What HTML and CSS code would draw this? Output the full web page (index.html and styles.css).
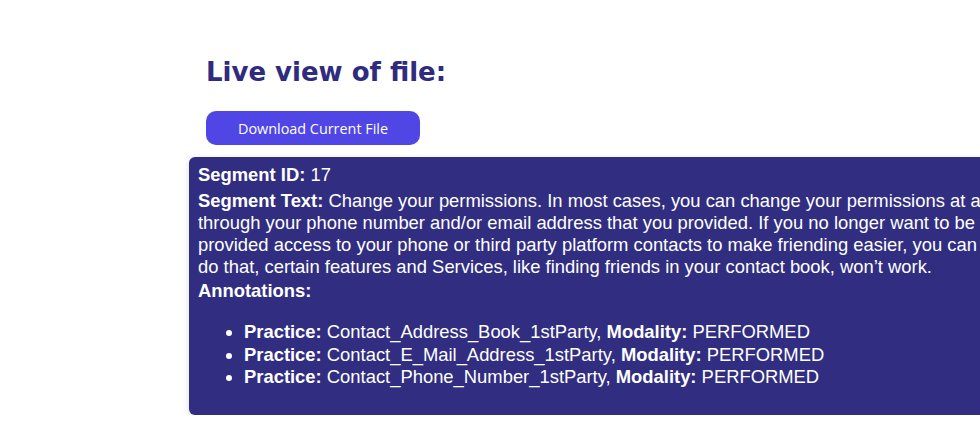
FILE: index.html
```html
<!DOCTYPE html>
<html>
<head>
<meta charset="utf-8">
<link rel="stylesheet" href="styles.css">
</head>
<body>
<div class="page">
  <div class="head">
    <h1 class="title">Live view of file:</h1>
    <button class="download">Download Current File</button>
  </div>
  <div class="segment">
    <p class="row id"><b>Segment ID:</b> 17</p>
    <p class="row text"><b>Segment Text:</b> Change your permissions. In most cases, you can change your permissions at any time to stop others from finding you<br>through your phone number and/or email address that you provided. If you no longer want to be found this way, just update<br>provided access to your phone or third party platform contacts to make friending easier, you can turn that off, but if you<br>do that, certain features and Services, like finding friends in your contact book, won’t work.</p>
    <p class="row"><b>Annotations:</b></p>
    <ul class="annotations">
      <li><b>Practice:</b> Contact_Address_Book_1stParty, <b>Modality:</b> PERFORMED</li>
      <li><b>Practice:</b> Contact_E_Mail_Address_1stParty, <b>Modality:</b> PERFORMED</li>
      <li><b>Practice:</b> Contact_Phone_Number_1stParty, <b>Modality:</b> PERFORMED</li>
    </ul>
  </div>
</div>
</body>
</html>
```
FILE: styles.css
```css
html, body {
  margin: 0;
  padding: 0;
  background: #ffffff;
  overflow: hidden;
}
.page {
  padding: 57px 0 0 189px;
  width: 1200px;
}
.head {
  padding-left: 17px;
  display: flex;
  flex-direction: column;
  align-items: flex-start;
}
.title {
  margin: 0;
  font-family: "DejaVu Sans", "Liberation Sans", sans-serif;
  font-weight: 700;
  font-size: 26px;
  line-height: 30px;
  color: #2f2b7d;
}
.download {
  margin-top: 24px;
  width: 214px;
  height: 34px;
  border: none;
  border-radius: 10px;
  background: #4f46e5;
  color: #ffffff;
  font-family: "Open Sans", sans-serif;
  font-size: 14.4px;
  padding: 0;
}
.segment {
  margin-top: 12px;
  width: 900px;
  background: #312e81;
  color: #ffffff;
  border-radius: 6px;
  box-shadow: 0 2px 6px rgba(0, 0, 0, 0.15);
  padding: 7px 9px 8px 9px;
  font-family: "Liberation Sans", Arial, sans-serif;
  font-size: 18.4px;
  line-height: 1.2;
}
.row {
  margin: 0;
}
.id {
  margin-bottom: 3.5px;
}
.text {
  white-space: nowrap;
  margin-bottom: 2px;
}
.annotations {
  margin: 19.5px 0 18px 0;
  padding-left: 46px;
  line-height: 22.5px;
}
```
